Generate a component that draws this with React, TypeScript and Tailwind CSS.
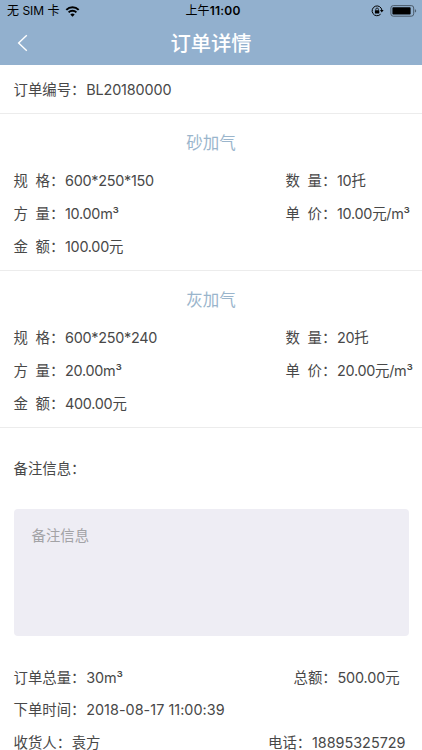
import clsx from "clsx";

interface FieldProps {
  label: string;
  value: string;
  spaced?: boolean;
  className?: string;
  valueClassName?: string;
}

interface Product {
  name: string;
  spec: string;
  count: string;
  volume: string;
  price: string;
  amount: string;
}

const products: Product[] = [
  {
    name: "砂加气",
    spec: "600*250*150",
    count: "10托",
    volume: "10.00m³",
    price: "10.00元/m³",
    amount: "100.00元",
  },
  {
    name: "灰加气",
    spec: "600*250*240",
    count: "20托",
    volume: "20.00m³",
    price: "20.00元/m³",
    amount: "400.00元",
  },
];

const Field = ({
  label,
  value,
  spaced,
  className,
  valueClassName = "pl-[0.7px] tracking-[-0.12px]",
}: FieldProps) => (
  <div className={clsx("flex whitespace-nowrap", className)}>
    {spaced ? (
      <span className="w-[51.5px] shrink-0">
        <span className="mr-[7.6px]">{label[0]}</span>
        {label[1]}：
      </span>
    ) : (
      <span className="shrink-0">{label}：</span>
    )}
    <span className={spaced ? "tracking-[-0.27px]" : valueClassName}>{value}</span>
  </div>
);

const StatusBar = () => (
  <div className="relative flex h-[22px] items-center justify-between pl-[7px] pr-[5px] text-[12px] leading-[22px] text-black">
    <div className="flex items-center gap-[5px]">
      <span>无 SIM 卡</span>
      <svg width="15" height="11" viewBox="0 0 14 11" fill="none">
        <path d="M0.8 3.9a8.8 8.8 0 0 1 12.4 0" stroke="#000" strokeWidth="2" />
        <path d="M3.1 6.3a5.5 5.5 0 0 1 7.8 0" stroke="#000" strokeWidth="1.9" />
        <path d="M7 10.8 4.8 8.5a3.1 3.1 0 0 1 4.4 0z" fill="#000" />
      </svg>
    </div>
    <span className="absolute inset-x-0 pl-[4px] text-center tracking-[0.2px]">
      上午<span className="font-semibold">11:00</span>
    </span>
    <div className="flex items-center gap-[6px]">
      {/* Rotation lock */}
      <svg width="13" height="12" viewBox="0 0 13 12" fill="none">
        <path d="M9.6 9.2A4.9 4.9 0 1 1 10.9 5.2" stroke="#000" strokeWidth="1" />
        <path d="M9 5h3.6l-1.8 2.4z" fill="#000" />
        <rect x="3.9" y="5.2" width="4.4" height="3.3" rx="0.4" fill="#000" />
        <path d="M4.8 5.4V4.3a1.3 1.3 0 0 1 2.6 0v1.1" stroke="#000" strokeWidth="0.8" />
      </svg>
      {/* Battery */}
      <svg width="27" height="12" viewBox="0 0 27 12" fill="none">
        <rect x="0.9" y="0.6" width="22.8" height="10.6" rx="2.4" stroke="#43505e" strokeWidth="0.9" />
        <rect x="2.4" y="2.2" width="18.2" height="7.4" rx="0.8" fill="#000" />
        <path d="M24.9 4.2q1.3.4 1.3 1.7t-1.3 1.7z" fill="#4f6072" />
      </svg>
    </div>
  </div>
);

const ProductSection = ({ product }: { product: Product }) => (
  <section className="h-[156.8px] border-b border-[#ececec] pt-[16px]">
    <h2 className="text-center text-[16.5px] leading-[26px] text-[#9ab5cc]">
      {product.name}
    </h2>
    <div className="mt-[9.3px] grid grid-cols-[272px_1fr] pl-[13.5px] leading-[32.7px]">
      <Field spaced label="规格" value={product.spec} />
      <Field spaced label="数量" value={product.count} />
      <Field spaced label="方量" value={product.volume} />
      <Field spaced label="单价" value={product.price} />
      <Field spaced label="金额" value={product.amount} />
    </div>
  </section>
);

const App = () => {
  return (
    <main className="h-[750px] overflow-hidden bg-white font-[Inter,'Noto_Sans_CJK_SC',sans-serif] text-[14.4px] text-[#484848]">
      <header className="h-[65px] bg-[#92b0ce]">
        <StatusBar />
        <div className="relative flex h-[43px] items-center justify-center">
          <svg
            className="absolute left-[17px] top-[12px]"
            width="11"
            height="18"
            viewBox="0 0 11 18"
            fill="none"
          >
            <path d="M9.8 1.2 1.6 9l8.2 7.8" stroke="#fff" strokeWidth="1.4" />
          </svg>
          <h1 className="text-[20.3px] font-medium leading-[43px] text-white">订单详情</h1>
        </div>
      </header>

      <div className="h-[49.2px] border-b border-[#ececec] pl-[13.5px] leading-[49px]">
        <Field label="订单编号" value="BL20180000" />
      </div>

      {products.map((product) => (
        <ProductSection key={product.name} product={product} />
      ))}

      <section className="px-[13.5px]">
        <h3 className="leading-[81px]">备注信息：</h3>
        <textarea
          className="block h-[127px] w-full resize-none rounded-[4px] bg-[#eeedf4] px-[18px] pt-[15px] leading-[24px] placeholder:text-[#a3a3a6]"
          placeholder="备注信息"
        />
      </section>

      <section className="mt-[26px] px-[13.5px] leading-[32.7px]">
        <div className="flex">
          <Field className="w-[280px]" label="订单总量" value="30m³" />
          <Field label="总额" value="500.00元" />
        </div>
        <Field
          label="下单时间"
          value="2018-08-17 11:00:39"
          valueClassName="pl-[0.7px] tracking-[0.03px]"
        />
        <div className="flex">
          <Field className="w-[254.5px]" label="收货人" value="袁方" />
          <Field label="电话" value="18895325729" valueClassName="pl-[0.7px]" />
        </div>
      </section>
    </main>
  );
};

export default App;
